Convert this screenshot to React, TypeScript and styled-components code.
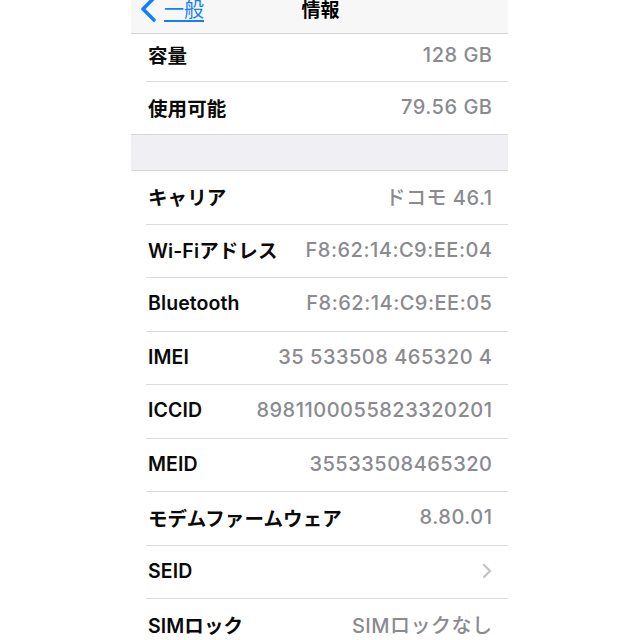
import React from "react";
import styled, { createGlobalStyle } from "styled-components";

const Global = createGlobalStyle`
  html, body { margin: 0; padding: 0; background: #ffffff; }
  body { font-family: "Inter", "Noto Sans CJK JP", sans-serif; }
`;

const Page = styled.div`
  width: 640px;
  height: 640px;
  overflow: hidden;
  display: flex;
  justify-content: flex-start;
  background: #ffffff;
`;

const Screen = styled.div`
  margin-left: 131px;
  width: 377px;
  display: flex;
  flex-direction: column;
  background: #ffffff;
`;

const NavBar = styled.div`
  height: 33px;
  flex: none;
  background: #f7f7f7;
  border-bottom: 1px solid #d4d4d6;
  display: grid;
  grid-template-columns: 1fr auto 1fr;
  align-items: center;
  padding-bottom: 8px;
  box-sizing: content-box;
  margin-top: -8px;
`;

const Back = styled.div`
  display: flex;
  align-items: center;
  gap: 7px;
  padding-left: 9px;
  color: #157efb;
  font-size: 20px;
  font-family: "Noto Sans CJK JP", sans-serif;
  font-weight: 400;
`;

const BackText = styled.span`
  text-decoration: underline;
  text-decoration-thickness: 1.5px;
  text-underline-offset: 3px;
  line-height: 1;
`;

const Title = styled.div`
  font-size: 19px;
  font-weight: 700;
  font-family: "Noto Sans CJK JP", sans-serif;
  color: #000;
  line-height: 1;
  padding-left: 2px;
`;

const Group = styled.div`
  display: flex;
  flex-direction: column;
  background: #ffffff;
`;

const Row = styled.div<{ $h: number; $shift?: number; $last?: boolean }>`
  height: ${(p) => p.$h}px;
  flex: none;
  margin-left: 15px;
  padding-right: 16px;
  display: flex;
  align-items: center;
  justify-content: space-between;
  border-bottom: ${(p) => (p.$last ? "none" : "1px solid #dcdce0")};
  padding-bottom: ${(p) => p.$shift ?? 2}px;
  box-sizing: border-box;
`;

const Label = styled.span`
  font-size: 19.5px;
  font-weight: 600;
  color: #0a0a0a;
  padding-left: 2px;
  letter-spacing: 0.1px;
`;

const Value = styled.span`
  font-size: 20px;
  font-weight: 450;
  color: #8a8a8f;
  letter-spacing: 0.5px;
  display: flex;
  align-items: center;
  margin-right: -0.5px;
`;

const Gap = styled.div`
  height: 35px;
  flex: none;
  background: #efeff4;
  border-top: 1px solid #d8d8dc;
  border-bottom: 1px solid #d8d8dc;
`;

const Chevron = () => (
  <svg width="12" height="16" viewBox="0 0 12 16" aria-hidden="true">
    <path d="M3 2 L9 8 L3 14" fill="none" stroke="#c4c4c9" strokeWidth="2.4" strokeLinecap="round" strokeLinejoin="round" />
  </svg>
);

const BackChevron = () => (
  <svg width="17" height="26" viewBox="0 0 17 26" aria-hidden="true">
    <path d="M14 2 L3 13 L14 24" fill="none" stroke="#157efb" strokeWidth="3.6" strokeLinecap="round" strokeLinejoin="round" />
  </svg>
);

const rows2: [string, React.ReactNode][] = [
  ["キャリア", "ドコモ 46.1"],
  ["Wi-Fiアドレス", "F8:62:14:C9:EE:04"],
  ["Bluetooth", "F8:62:14:C9:EE:05"],
  ["IMEI", "35 533508 465320 4"],
  ["ICCID", "8981100055823320201"],
  ["MEID", "35533508465320"],
  ["モデムファームウェア", "8.80.01"],
  ["SEID", <Chevron />],
  ["SIMロック", "SIMロックなし"],
];

export default function App() {
  return (
    <>
      <Global />
      <Page>
        <Screen>
          <NavBar>
            <Back>
              <BackChevron />
              <BackText>一般</BackText>
            </Back>
            <Title>情報</Title>
            <div />
          </NavBar>
          <Group>
            <Row $h={48} $shift={6}>
              <Label>容量</Label>
              <Value>128 GB</Value>
            </Row>
            <Row $h={52} $last>
              <Label>使用可能</Label>
              <Value>79.56 GB</Value>
            </Row>
          </Group>
          <Gap />
          <Group>
            {rows2.map(([l, v], i) => (
              <Row key={i} $h={53.5}>
                <Label>{l}</Label>
                <Value>{v}</Value>
              </Row>
            ))}
          </Group>
        </Screen>
      </Page>
    </>
  );
}
